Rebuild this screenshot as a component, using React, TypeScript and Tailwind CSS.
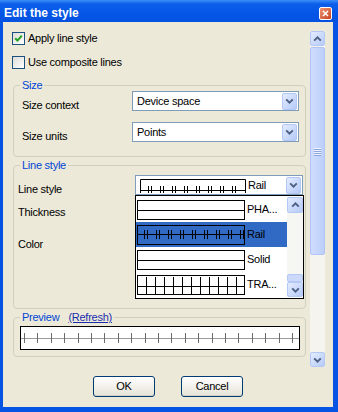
import React from 'react';

const range = (n: number) => Array.from({ length: n }, (_, i) => i);

function Chevron({ up = false }: { up?: boolean }) {
    return (
        <svg width="9" height="6" viewBox="0 0 9 6" className="block">
            <path
                d={up ? 'M1.2 4.6 L4.5 1.4 L7.8 4.6' : 'M1.2 1.4 L4.5 4.6 L7.8 1.4'}
                stroke="#4d6185"
                strokeWidth="2"
                fill="none"
            />
        </svg>
    );
}

function ArrowButton({ up = false, className = '' }: { up?: boolean; className?: string }) {
    return (
        <div
            className={`flex items-center justify-center rounded-[2px] border border-[#b4c8f6] bg-gradient-to-br from-[#e4ecfe] to-[#b6caf8] ${className}`}
        >
            <Chevron up={up} />
        </div>
    );
}

// a horizontal line with optional tick marks, as drawn by the style previews
function LinePattern({
    w,
    h,
    y,
    ticks = [],
    t1 = 0,
    t2 = 0,
    line = '#000',
    tick = '#000',
}: {
    w: number;
    h: number;
    y: number;
    ticks?: number[];
    t1?: number;
    t2?: number;
    line?: string;
    tick?: string;
}) {
    return (
        <svg width={w} height={h} className="block">
            <line x1={0} x2={w} y1={y + 0.5} y2={y + 0.5} stroke={line} strokeWidth={1} />
            {ticks.map((x) => (
                <line key={x} x1={x + 0.5} x2={x + 0.5} y1={t1} y2={t2} stroke={tick} strokeWidth={1} />
            ))}
        </svg>
    );
}

const railTicks = range(9).flatMap((i) => [6 + i * 12, 9 + i * 12]);
const traTicks = range(11).map((i) => 8 + i * 9);
const previewTicks = range(21).map((i) => Math.round(3 + i * 13.4));

function Checkbox({ checked, label }: { checked?: boolean; label: string }) {
    return (
        <div className="flex items-center h-[16px] gap-[3px]">
            <span className="w-[13px] h-[13px] border border-[#1c5180] bg-gradient-to-br from-[#dcdcd7] to-white flex items-center justify-center">
                {checked && (
                    <svg width="9" height="9" viewBox="0 0 9 9" className="block">
                        <path d="M1.2 4.2 L3.5 6.6 L7.8 1.6" stroke="#21a121" strokeWidth="2" fill="none" />
                    </svg>
                )}
            </span>
            <span className="leading-[13px]">{label}</span>
        </div>
    );
}

function Combo({ text, className = '' }: { text: string; className?: string }) {
    return (
        <div className={`h-[20px] border border-[#7f9db9] bg-white flex items-center pl-[4px] pr-[1px] ${className}`}>
            <span className="flex-1 leading-[13px]">{text}</span>
            <ArrowButton className="w-[15px] h-[17px]" />
        </div>
    );
}

function Group({ legend, children, className = '' }: { legend: React.ReactNode; children: React.ReactNode; className?: string }) {
    return (
        <fieldset className={`ml-[10px] w-[293px] border border-[#d0d0bf] rounded-[4px] px-0 ${className}`}>
            <legend className="ml-[6px] px-[2px] leading-[12px] text-[#0046d5]">{legend}</legend>
            {children}
        </fieldset>
    );
}

const listItems = [
    { name: 'PHA...', kind: 'solid' },
    { name: 'Rail', kind: 'rail', selected: true },
    { name: 'Solid', kind: 'solid' },
    { name: 'TRA...', kind: 'tra' },
];

function StyleList() {
    return (
        <div className="absolute left-0 top-[20px] z-10 w-[169px] h-[104px] border border-black bg-white flex py-[1px]">
            <div className="flex-1 flex flex-col">
                {listItems.map((it) => (
                    <div
                        key={it.name}
                        className={`h-[25px] flex items-center pl-[1px] gap-[2px] ${it.selected ? 'bg-[#316ac5]' : ''}`}
                    >
                        <div className="w-[108px] h-[20px] border border-black">
                            {it.kind === 'solid' && <LinePattern w={106} h={18} y={9} />}
                            {it.kind === 'rail' && <LinePattern w={106} h={18} y={8} ticks={railTicks} t1={4} t2={13} />}
                            {it.kind === 'tra' && <LinePattern w={106} h={18} y={10} ticks={traTicks} t1={1} t2={18} />}
                        </div>
                        <span className="leading-[13px]">{it.name}</span>
                    </div>
                ))}
            </div>
            <div className="w-[16px] flex flex-col bg-[#f6f6f2]">
                <ArrowButton up className="h-[16px]" />
                <div className="flex-1" />
                <div className="h-[8px] rounded-[2px] border border-[#b4c8f6] bg-[#cdd9fb]" />
                <ArrowButton className="h-[15px]" />
            </div>
        </div>
    );
}

export default function App() {
    return (
        <div className="w-[338px] h-[412px] bg-[#0554e4] flex flex-col overflow-hidden font-['Liberation_Sans',Arial,sans-serif] text-[11px] tracking-[-0.25px] text-black">
            {/* Title bar */}
            <div className="h-[22px] shrink-0 flex items-start justify-between pl-[4px] pr-[6px] pt-[6px] bg-[linear-gradient(to_bottom,#3d8ef9_0%,#0b5ee9_18%,#0556e6_60%,#0452e0_100%)]">
                <span className="text-white font-bold text-[12px] leading-[14px] tracking-normal">Edit the style</span>
                <div className="mt-[1px] w-[13px] h-[13px] rounded-[2px] border border-white bg-gradient-to-br from-[#ec9472] to-[#c6401c] flex items-center justify-center">
                    <svg width="7" height="7" viewBox="0 0 7 7" className="block">
                        <path d="M1 1 L6 6 M6 1 L1 6" stroke="#fff" strokeWidth="1.6" />
                    </svg>
                </div>
            </div>

            {/* Dialog body */}
            <div className="ml-[3px] mr-[5px] h-[385px] bg-[#ece9d8] flex flex-col">
                <div className="h-[345px] flex">
                    <div className="w-[307px] pt-[8px] flex flex-col">
                        <div className="pl-[9px] flex flex-col gap-[8px]">
                            <Checkbox checked label="Apply line style" />
                            <Checkbox label="Use composite lines" />
                        </div>

                        {/* Size */}
                        <Group legend="Size" className="mt-[9px]">
                            <div className="pl-[8px] pb-[14px] flex flex-col gap-[11px]">
                                <div className="flex h-[20px]">
                                    <span className="w-[110px] pt-[8px] leading-[13px]">Size context</span>
                                    <Combo text="Device space" className="w-[167px]" />
                                </div>
                                <div className="flex h-[20px]">
                                    <span className="w-[110px] pt-[8px] leading-[13px]">Size units</span>
                                    <Combo text="Points" className="w-[167px]" />
                                </div>
                            </div>
                        </Group>

                        {/* Line style */}
                        <Group legend="Line style" className="mt-[2px]">
                            <div className="pl-[4px] pt-[4px] pb-[58px] flex flex-col">
                                <div className="flex h-[20px]">
                                    <span className="w-[117px] pt-[8px] leading-[13px]">Line style</span>
                                    <div className="relative">
                                        <div className="w-[168px] h-[20px] border border-[#7f9db9] bg-white flex items-center pl-[4px] pr-[1px] gap-[2px]">
                                            <svg width="106" height="14" className="block mt-[2px]">
                                                <path d="M0.5 14 V0.5 H105.5 V14" stroke="#000" fill="none" />
                                                <line x1={0} x2={106} y1={11.5} y2={11.5} stroke="#000" />
                                                {range(8).flatMap((i) => [8 + i * 12, 11 + i * 12]).map((x) => (
                                                    <line key={x} x1={x + 0.5} x2={x + 0.5} y1={7} y2={14} stroke="#000" />
                                                ))}
                                            </svg>
                                            <span className="flex-1 leading-[13px]">Rail</span>
                                            <ArrowButton className="w-[15px] h-[17px]" />
                                        </div>
                                        <StyleList />
                                    </div>
                                </div>
                                <div className="h-[20px] mt-[3px] pt-[8px] leading-[13px]">Thickness</div>
                                <div className="h-[20px] mt-[12px] pt-[8px] leading-[13px]">Color</div>
                            </div>
                        </Group>

                        {/* Preview */}
                        <Group
                            className="mt-[2px]"
                            legend={
                                <>
                                    <span>Preview</span>
                                    <span className="ml-[9px] underline text-[#1b2fae]">(Refresh)</span>
                                </>
                            }
                        >
                            <div className="pl-[6px] pt-[3px] pb-[6px]">
                                <div className="w-[280px] h-[24px] border border-black bg-white">
                                    <LinePattern
                                        w={278}
                                        h={22}
                                        y={11}
                                        ticks={previewTicks}
                                        t1={6}
                                        t2={16}
                                        line="#9a9a9a"
                                        tick="#6a6a6a"
                                    />
                                </div>
                            </div>
                        </Group>
                    </div>

                    {/* Vertical scrollbar */}
                    <div className="pt-[9px] w-[15px]">
                        <div className="h-[336px] flex flex-col bg-[#f5f4ef]">
                            <ArrowButton up className="h-[15px]" />
                            <div className="mt-[1px] h-[208px] rounded-[2px] border border-[#b0c4f5] bg-gradient-to-r from-[#d0dcfc] to-[#bccffa] flex items-center justify-center">
                                <div className="flex flex-col gap-[1px]">
                                    {range(4).map((i) => (
                                        <div key={i} className="w-[7px] h-[1px] bg-[#eef3fe] shadow-[0_1px_0_#8ca6e4]" />
                                    ))}
                                </div>
                            </div>
                            <div className="flex-1" />
                            <ArrowButton className="h-[15px]" />
                        </div>
                    </div>
                </div>

                {/* Buttons */}
                <div className="mt-[9px] flex justify-center gap-[26px]">
                    {['OK', 'Cancel'].map((b) => (
                        <button
                            key={b}
                            className="w-[62px] h-[21px] rounded-[3px] border border-[#003c74] bg-gradient-to-b from-white to-[#e6e3d6] shadow-[inset_0_-1px_0_#d6d0c5] leading-[13px]"
                        >
                            {b}
                        </button>
                    ))}
                </div>
            </div>
        </div>
    );
}
